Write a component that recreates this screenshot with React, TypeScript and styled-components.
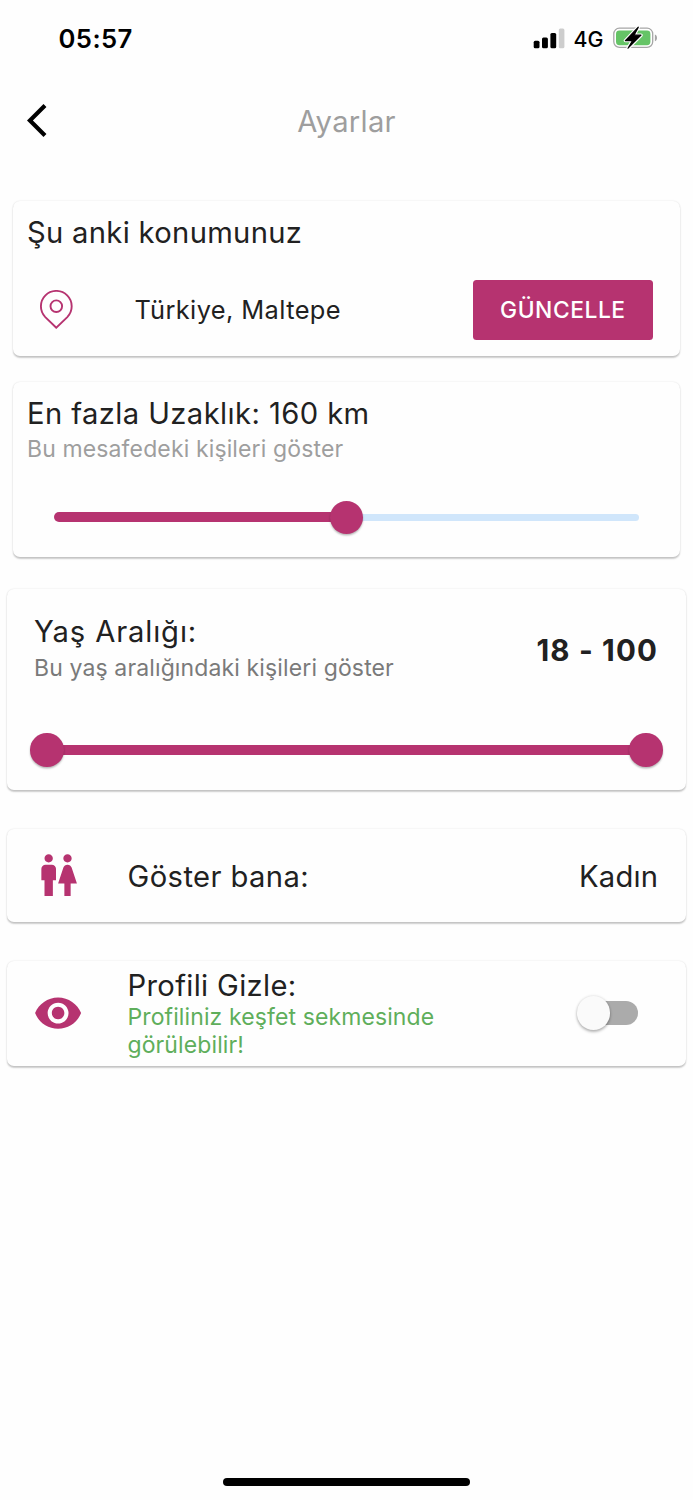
import React from "react";
import styled, { createGlobalStyle } from "styled-components";

const pink = "#b63370";

const GlobalStyle = createGlobalStyle`
  * { box-sizing: border-box; }
  body { margin: 0; background: #fefefe; }
`;

const Screen = styled.div`
  width: 693px;
  height: 1500px;
  display: flex;
  flex-direction: column;
  background: #fefefe;
  color: #212121;
  font-family: Inter, "Noto Sans", sans-serif;
  overflow: hidden;
`;

const Text = styled.div<{
  $size: number;
  $line: number;
  $spacing?: number;
  $weight?: number;
  $color?: string;
}>`
  font-size: ${(p) => p.$size}px;
  line-height: ${(p) => p.$line}px;
  letter-spacing: ${(p) => p.$spacing ?? 0}px;
  font-weight: ${(p) => p.$weight ?? 400};
  color: ${(p) => p.$color ?? "#212121"};
  white-space: nowrap;
`;

const StatusBar = styled.header`
  height: 76px;
  padding: 0 35.5px 0 58.5px;
  display: flex;
  align-items: center;
  justify-content: space-between;
`;

const Clock = styled(Text)`
  padding-top: 2px;
`;

const StatusIcons = styled.div`
  display: flex;
  align-items: center;
`;

const NetworkLabel = styled(Text)`
  margin: 2px 8px 0 9px;
  width: 31px;
`;

const NavBar = styled.nav`
  height: 90px;
  padding: 0 27px;
  display: grid;
  grid-template-columns: 1fr auto 1fr;
  align-items: center;
`;

const NavTitle = styled(Text)`
  padding-top: 2px;
`;

const BackButton = styled.button`
  border: 0;
  padding: 0;
  background: none;
  display: flex;
  justify-self: start;
  margin-top: -1px;
`;

const Content = styled.main`
  flex: 1;
  display: flex;
  flex-direction: column;
  padding-top: 35px;
`;

const Card = styled.section<{ $inset: number; $height: number; $gap: number }>`
  margin: 0 ${(p) => p.$inset}px ${(p) => p.$gap}px;
  height: ${(p) => p.$height}px;
  border-radius: 7px;
  background: #fefefe;
  box-shadow: 0 1.6px 1.6px rgba(0, 0, 0, 0.17), 0 0.5px 1.8px rgba(0, 0, 0, 0.1);
  flex-shrink: 0;
`;

const LocationCard = styled(Card)`
  padding: 15px 27.3px 0 13.8px;
`;

const LocationRow = styled.div`
  display: flex;
  align-items: center;
  margin-top: 30px;
  padding-left: 12px;
`;

const Place = styled(Text)`
  margin-left: 61.5px;
  flex: 1;
`;

const UpdateButton = styled.button`
  width: 179.3px;
  height: 60px;
  border: 0;
  border-radius: 3.5px;
  padding: 0;
  background: ${pink};
  display: flex;
  align-items: center;
  justify-content: center;
  font-family: inherit;
`;

const DistanceCard = styled(Card)`
  padding: 14.6px 13.8px 0;
`;

const AgeCard = styled(Card)`
  padding: 26px 28px 0 27.2px;
`;

const AgeHeader = styled.div`
  display: flex;
  align-items: center;
  justify-content: space-between;
`;

const Subtitle = styled(Text)`
  margin-top: 4px;
`;

const AgeSubtitle = styled(Text)`
  margin-top: 5px;
`;

const AgeValue = styled(Text)`
  margin-top: 2.4px;
`;

const Slider = styled.div<{ $margin: string }>`
  height: 33.4px;
  margin: ${(p) => p.$margin};
  display: flex;
  align-items: center;
`;

const Track = styled.span<{ $active?: boolean; $round?: string }>`
  flex: 1;
  height: ${(p) => (p.$active ? 10 : 6.8)}px;
  border-radius: ${(p) => p.$round ?? "0"};
  background: ${(p) => (p.$active ? pink : "#d0e6fb")};
`;

const Thumb = styled.span`
  width: 33.4px;
  height: 33.4px;
  margin: 0 -1px;
  border-radius: 50%;
  background: ${pink};
  box-shadow: 0 1.5px 2px rgba(0, 0, 0, 0.28);
  z-index: 1;
`;

const OptionCard = styled(Card)`
  display: flex;
  align-items: center;
  padding: 0 28px 0 26.7px;
`;

const OptionIcon = styled.svg`
  width: 50.2px;
  height: 50.2px;
  margin-right: 43.8px;
  fill: ${pink};
  flex-shrink: 0;
`;

const OptionBody = styled.div`
  flex: 1;
  padding-top: 2px;
`;

const OptionLabel = styled(Text)`
  padding-top: 1.2px;
`;

const OptionValue = styled(Text)`
  padding-top: 3.2px;
`;

const Switch = styled.div`
  width: 61px;
  height: 34px;
  margin-right: 20.5px;
  display: flex;
  align-items: center;
`;

const SwitchThumb = styled.span`
  width: 33.6px;
  height: 33.6px;
  border-radius: 50%;
  background: #fafafa;
  box-shadow: 0 2px 3px rgba(0, 0, 0, 0.26), 0 0 3px rgba(0, 0, 0, 0.14);
  z-index: 1;
`;

const SwitchTrack = styled.span`
  flex: 1;
  height: 23.5px;
  margin-left: -17px;
  border-radius: 0 12px 12px 0;
  background: #ababab;
`;

const HomeIndicator = styled.div`
  width: 247.5px;
  height: 8.6px;
  margin: 0 auto 13.6px;
  border-radius: 5px;
  background: #000;
`;

const SignalIcon = () => (
  <svg width="32" height="21" viewBox="533 27.5 32 21">
    <rect x="533.7" y="40.3" width="5.8" height="7.4" rx="1.5" />
    <rect x="542" y="37" width="5.9" height="10.7" rx="1.5" />
    <rect x="550.4" y="32.6" width="5.8" height="15.1" rx="1.5" />
    <rect x="558.8" y="28" width="5.6" height="19.7" rx="1.5" fill="#cdcdcd" />
  </svg>
);

const boltPath = "M638.3 27.2L625.4 40.6H632.6L628 48.2L641 35.2H634Z";

const BatteryIcon = () => (
  <svg width="45" height="24" viewBox="613 26 45 24">
    <rect x="613.8" y="28.2" width="38.9" height="19.2" rx="5.6" fill="#fff" stroke="#a6a6a6" strokeWidth="1.3" />
    <rect x="616" y="30.5" width="34.4" height="14.7" rx="3.4" fill="#65c466" />
    <path d="M654.9 34.6c1.4.6 2.1 1.8 2.1 3.3s-.7 2.7-2.1 3.3z" fill="#a6a6a6" />
    <path d={boltPath} fill="#fff" stroke="#fff" strokeWidth="3.4" strokeLinejoin="round" />
    <path d={boltPath} fill="#000" stroke="#000" strokeWidth="1.2" strokeLinejoin="round" />
  </svg>
);

const BackIcon = () => (
  <svg width="19.5" height="33" viewBox="0 2.1 11.7 19.8">
    <path d="M11.67 3.87L9.9 2.1 0 12l9.9 9.9 1.77-1.77L3.54 12z" />
  </svg>
);

const PinIcon = () => (
  <svg width="34" height="41" viewBox="39 289.4 34 41" fill="none" stroke={pink} strokeWidth="1.9">
    <path d="M56.3 327.1L45.3 316.5A15.4 15.4 0 1 1 67.3 316.5Z" />
    <circle cx="56.3" cy="305.6" r="5.8" />
  </svg>
);

export default function App() {
  return (
    <Screen>
      <GlobalStyle />
      <StatusBar>
        <Clock $size={25.7} $line={32} $weight={600} $spacing={0.4} $color="#000">
          05:57
        </Clock>
        <StatusIcons>
          <SignalIcon />
          <NetworkLabel $size={21.3} $line={26} $weight={500} $color="#000">
            4G
          </NetworkLabel>
          <BatteryIcon />
        </StatusIcons>
      </StatusBar>
      <NavBar>
        <BackButton aria-label="Geri">
          <BackIcon />
        </BackButton>
        <NavTitle $size={29.2} $line={34} $spacing={0.28} $color="#9e9e9e">
          Ayarlar
        </NavTitle>
      </NavBar>
      <Content>
        <LocationCard $inset={13.2} $height={155.3} $gap={25.7}>
          <Text $size={29.2} $line={34} $spacing={0.31}>
            Şu anki konumunuz
          </Text>
          <LocationRow>
            <PinIcon />
            <Place $size={25.4} $line={30} $spacing={0.4}>
              Türkiye, Maltepe
            </Place>
            <UpdateButton>
              <Text $size={22.8} $line={28} $weight={500} $spacing={0.55} $color="#fff">
                GÜNCELLE
              </Text>
            </UpdateButton>
          </LocationRow>
        </LocationCard>

        <DistanceCard $inset={13.2} $height={175.3} $gap={32.2}>
          <Text $size={29.2} $line={34} $spacing={0.41}>
            En fazla Uzaklık: 160 km
          </Text>
          <Subtitle $size={23} $line={28} $spacing={0.13} $color="#9e9e9e">
            Bu mesafedeki kişileri göster
          </Subtitle>
          <Slider $margin="38px 27.2px 0 26.8px">
            <Track $active $round="5px 0 0 5px" />
            <Thumb />
            <Track $round="0 4px 4px 0" />
          </Slider>
        </DistanceCard>

        <AgeCard $inset={6.8} $height={200.7} $gap={38.5}>
          <AgeHeader>
            <div>
              <Text $size={29.2} $line={34} $spacing={0.86}>
                Yaş Aralığı:
              </Text>
              <AgeSubtitle $size={23} $line={28} $spacing={0.13} $color="#7a7a7a">
                Bu yaş aralığındaki kişileri göster
              </AgeSubtitle>
            </div>
            <AgeValue $size={29.5} $line={34} $weight={700} $spacing={1.2}>
              18 - 100
            </AgeValue>
          </AgeHeader>
          <Slider $margin="51px -3.4px 0 -2.6px">
            <Thumb />
            <Track $active />
            <Thumb />
          </Slider>
        </AgeCard>

        <OptionCard $inset={6.8} $height={93} $gap={39}>
          <OptionIcon viewBox="0 0 24 24">
            <path d="M5.5 22v-7.5H4V9c0-1.1.9-2 2-2h3c1.1 0 2 .9 2 2v5.5H9.5V22h-4zM18 22v-6h3l-2.54-7.63C18.18 7.55 17.42 7 16.56 7h-.12c-.86 0-1.63.55-1.9 1.37L12 16h3v6h3zM7.5 6c1.11 0 2-.89 2-2s-.89-2-2-2-2 .89-2 2 .89 2 2 2zm9 0c1.11 0 2-.89 2-2s-.89-2-2-2-2 .89-2 2 .89 2 2 2z" />
          </OptionIcon>
          <OptionBody>
            <OptionLabel $size={29.2} $line={34} $spacing={0.41}>
              Göster bana:
            </OptionLabel>
          </OptionBody>
          <OptionValue $size={29.2} $line={34} $spacing={0.2}>
            Kadın
          </OptionValue>
        </OptionCard>

        <OptionCard $inset={6.8} $height={105} $gap={0}>
          <OptionIcon viewBox="0 0 24 24">
            <path d="M12 4.5C7 4.5 2.73 7.61 1 12c1.73 4.39 6 7.5 11 7.5s9.27-3.11 11-7.5c-1.73-4.39-6-7.5-11-7.5zM12 17c-2.76 0-5-2.24-5-5s2.24-5 5-5 5 2.24 5 5-2.24 5-5 5zm0-8c-1.66 0-3 1.34-3 3s1.34 3 3 3 3-1.34 3-3-1.34-3-3-3z" />
          </OptionIcon>
          <OptionBody>
            <Text $size={29.2} $line={34} $spacing={0.34}>
              Profili Gizle:
            </Text>
            <Text $size={23} $line={28.4} $spacing={0.11} $color="#5fae5b">
              Profiliniz keşfet sekmesinde
              <br />
              görülebilir!
            </Text>
          </OptionBody>
          <Switch role="switch" aria-checked="false">
            <SwitchThumb />
            <SwitchTrack />
          </Switch>
        </OptionCard>
      </Content>
      <HomeIndicator />
    </Screen>
  );
}
